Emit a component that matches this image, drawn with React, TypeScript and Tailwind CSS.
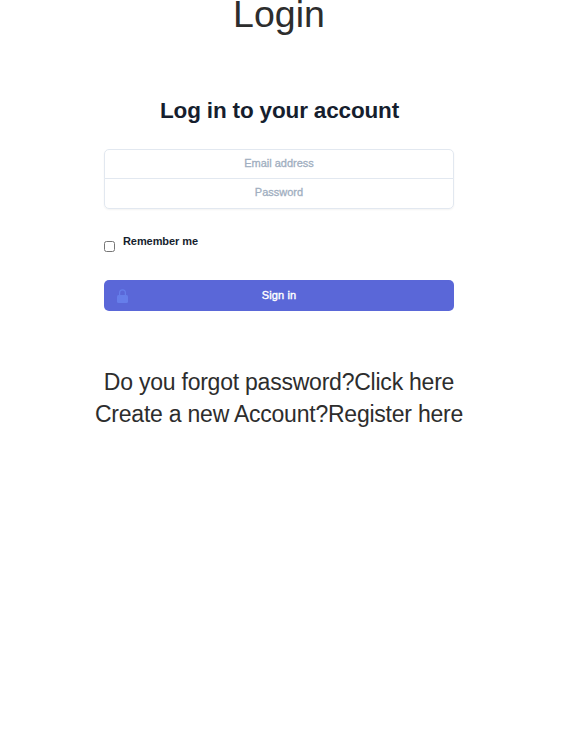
export default function App() {
  return (
    <main className="flex h-[732px] w-[577px] flex-col items-start overflow-hidden bg-white pl-[104px] font-['Liberation_Sans',Arial,sans-serif] text-[#2d2d2d]">
      <div className="flex w-[350px] flex-col items-center">
        <h1 className="h-[40px] text-[37.5px] leading-[28px] whitespace-nowrap">Login</h1>
        <h2 className="mt-[54px] h-[32px] pl-px text-[22.5px] leading-[33px] font-bold tracking-[-0.16px] whitespace-nowrap text-[#161e2e]">Log in to your account</h2>
        <form className="mt-[23px] w-full" onSubmit={(e) => e.preventDefault()}>
          <div className="rounded-[5px] shadow-[0_1px_2px_rgba(0,0,0,0.05)]">
            <input aria-label="Email address" placeholder="Email address" className="block h-[30px] w-full rounded-t-[5px] border border-[#e2e8f0] pb-[2px] text-center text-[11px] outline-none [-webkit-text-stroke:0.3px_#a0aec0] placeholder:text-[#a0aec0]" />
            <input aria-label="Password" type="password" placeholder="Password" className="-mt-px block h-[31px] w-full rounded-b-[5px] border border-[#e2e8f0] pb-[3px] text-center text-[11px] outline-none [-webkit-text-stroke:0.3px_#a0aec0] placeholder:text-[#a0aec0]" />
          </div>
          <label className="mt-[24px] flex h-[20px] text-[11px] leading-[16px] font-bold tracking-[-0.08px] text-[#161e2e]">
            <input type="checkbox" className="mt-[8px] mr-[8px] h-[11px] w-[11px]" />
            Remember me
          </label>
          <button className="mt-[27px] flex h-[31px] w-full items-center rounded-[5px] bg-[#5a67d8] pl-[13px] text-[11px] tracking-[0.1px] text-white [-webkit-text-stroke:0.4px_white]">
            <svg className="h-[14px] w-[11px] text-[#667eea]" viewBox="0 0 11 14" fill="none">
              <path d="M2.6 7V3.8a2.9 3 0 0 1 5.8 0V7" stroke="currentColor" strokeWidth="1.2" />
              <rect y="6" width="11" height="8" rx="1.5" fill="currentColor" />
            </svg>
            <span className="grow pr-[24px] text-center">Sign in</span>
          </button>
        </form>
        <div className="mt-[55px] text-center text-[23px] leading-[32px] tracking-[-0.23px] whitespace-nowrap">
          <p>Do you forgot password?<a>Click here</a></p>
          <p>Create a new Account?<a>Register here</a></p>
        </div>
      </div>
    </main>
  );
}
